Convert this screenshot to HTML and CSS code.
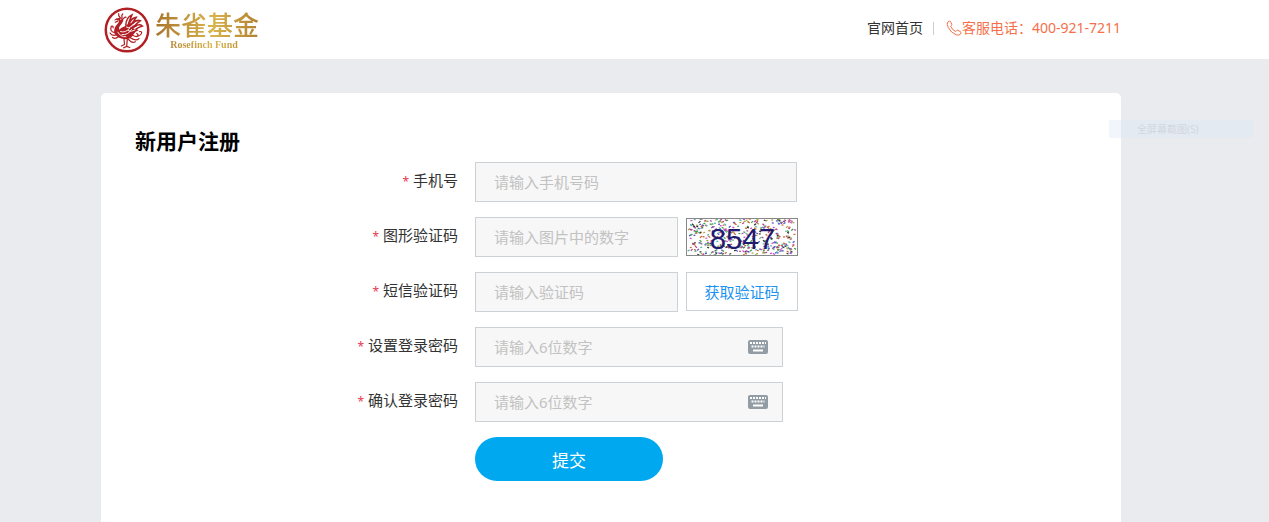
FILE: index.html
```html
<!DOCTYPE html>
<html lang="zh-CN">
<head>
  <meta charset="UTF-8">
  <meta name="viewport" content="width=device-width, initial-scale=1.0">
  <title>新用户注册</title>
  <link rel="stylesheet" href="styles.css">
</head>
<body>
  <header class="header">
    <div class="header-inner">
      <div class="logo">
        <svg class="logo-mark" viewBox="0 0 156 156" aria-hidden="true">
          <circle class="ring" cx="78" cy="78" r="69"/>
          <!-- head, neck and body -->
          <path d="M35 47 Q42 39 51 39 Q61 34 66 43 Q68 50 61 57 Q51 67 52 77 Q59 71 71 66 Q84 54 103 54 Q96 59 91 65 Q102 61 112 64 Q103 69 98 75 Q108 73 116 79 Q105 82 100 91 Q92 108 72 108 Q44 106 37 88 Q33 72 46 59 Q54 51 51 47 Q45 44 35 47Z"/>
          <!-- crest -->
          <path class="line" d="M56 38 Q49 31 51 25 M62 38 Q59 30 64 26 M67 41 Q70 35 75 37 M48 49 L40 53"/>
          <!-- wing feathers -->
          <path class="feather" d="M74 62 Q75 38 94 29 Q88 43 83 57 M85 57 Q92 39 108 37 Q100 49 94 57 M96 57 Q108 43 121 48 Q111 55 103 64 M104 66 Q118 57 128 65 Q116 69 107 75"/>
          <path class="cut" d="M57 83 Q73 89 87 72 M62 93 Q82 95 93 76 M48 85 Q57 101 74 100 M76 69 Q83 75 95 65 M81 80 Q92 86 104 78"/>
          <!-- tail -->
          <path class="line" d="M38 87 Q21 83 27 66 Q33 63 33 71 M43 94 Q28 98 23 88 M49 100 Q41 109 31 102 M96 95 Q114 105 124 91 Q129 82 119 83 M89 103 Q107 116 117 106 M81 107 Q94 123 105 116 M110 89 Q118 95 111 98"/>
          <!-- legs -->
          <path class="line" d="M68 105 L70 125 M79 106 L77 132 M70 125 L60 130 M77 131 L67 136 M77 131 L87 135"/>
          <circle class="eye" cx="58" cy="43" r="2"/>
        </svg>
        <div class="logo-text">
          <div class="logo-name">朱雀基金</div>
          <div class="logo-en">Rosefinch Fund</div>
        </div>
      </div>
      <nav class="top-nav">
        <a class="home-link" href="#">官网首页</a>
        <span class="divider"></span>
        <span class="hotline">
          <svg class="phone-icon" viewBox="0 0 16 16" aria-hidden="true">
            <path d="M3.4 1.2 L1.6 2.2 Q.6 4 2.2 7.3 Q5 13 10.2 14.8 Q13 15.6 14.2 14.4 L15 12.8 Q15.2 12 14.3 11.5 L11.8 10.3 Q11.1 10 10.6 10.6 L9.8 11.5 Q6.2 10.2 4.7 6.3 L5.5 5.4 Q6 4.9 5.7 4.2 L4.6 1.6 Q4.2 .8 3.4 1.2Z"/>
          </svg>
          <span>客服电话：400-921-7211</span>
        </span>
      </nav>
    </div>
  </header>

  <main class="container">
    <form class="card">
      <h1 class="title">新用户注册</h1>

      <div class="form-row">
        <label class="form-label" for="mobile"><span class="required">*</span> 手机号</label>
        <input class="form-input" id="mobile" type="text" placeholder="请输入手机号码">
      </div>

      <div class="form-row">
        <label class="form-label" for="captcha"><span class="required">*</span> 图形验证码</label>
        <input class="form-input short" id="captcha" type="text" placeholder="请输入图片中的数字">
        <svg class="captcha-img" viewBox="0 0 112 38" role="img" aria-label="图形验证码">
          <g id="captchaNoise"></g>
          <text class="captcha-code" x="22" y="32">8547</text>
        </svg>
      </div>

      <div class="form-row">
        <label class="form-label" for="smsCode"><span class="required">*</span> 短信验证码</label>
        <input class="form-input short" id="smsCode" type="text" placeholder="请输入验证码">
        <button class="code-btn" type="button">获取验证码</button>
      </div>

      <div class="form-row">
        <label class="form-label" for="password"><span class="required">*</span> 设置登录密码</label>
        <div class="password-box">
          <input class="password-input" id="password" type="password" placeholder="请输入6位数字">
          <svg class="keyboard-icon" viewBox="0 0 20 14" aria-hidden="true">
            <rect class="board" width="20" height="14" rx="2"/>
            <path class="keys" d="M2 3h16M3.5 6.5h13"/>
            <path class="space" d="M5 10.5h10"/>
          </svg>
        </div>
      </div>

      <div class="form-row">
        <label class="form-label" for="confirm"><span class="required">*</span> 确认登录密码</label>
        <div class="password-box">
          <input class="password-input" id="confirm" type="password" placeholder="请输入6位数字">
          <svg class="keyboard-icon" viewBox="0 0 20 14" aria-hidden="true">
            <rect class="board" width="20" height="14" rx="2"/>
            <path class="keys" d="M2 3h16M3.5 6.5h13"/>
            <path class="space" d="M5 10.5h10"/>
          </svg>
        </div>
      </div>

      <button class="submit-btn" type="submit">提交</button>
    </form>
  </main>

  <div class="ghost-menu">全屏幕截图(S)</div>
  <script src="captcha.js"></script>
</body>
</html>
```

FILE: styles.css
```css
:root {
  --page-bg: #e9ebef;
  --border: #ccd1d6;
  --field-bg: #f7f7f7;
  --text: #333;
  --placeholder: #c2c2c2;
  --blue: #00a8f0;
  --orange: #f5704a;
  --red: #b01f24;
}

* {
  margin: 0;
  padding: 0;
  box-sizing: border-box;
}

body {
  min-height: 100vh;
  display: flex;
  flex-direction: column;
  font-family: "Noto Sans", "Noto Sans CJK SC", sans-serif;
  font-size: 15px;
  color: var(--text);
  background: var(--page-bg);
}

input,
button {
  font-family: inherit;
  font-size: 15px;
}

/* Header */
.header {
  background: #fff;
  padding: 0 148px 0 101px;
}

.header-inner {
  height: 59px;
  display: flex;
  align-items: center;
  justify-content: space-between;
}

.logo {
  display: flex;
  align-items: center;
  gap: 4px;
  padding-left: 2px;
}

.logo-mark {
  width: 48px;
  height: 48px;
  fill: var(--red);
}

.ring {
  fill: none;
  stroke: var(--red);
  stroke-width: 8;
}

.line,
.feather,
.cut {
  fill: none;
  stroke: var(--red);
  stroke-width: 4;
  stroke-linecap: round;
}

.feather {
  stroke-width: 5;
}

.cut {
  stroke: #fff;
  stroke-width: 3;
}

.eye {
  fill: #fff;
}

.logo-text {
  color: transparent;
  background: linear-gradient(90deg, #a8742c, #d9b44c 55%, #b08030);
  -webkit-background-clip: text;
  background-clip: text;
}

.logo-name {
  font-family: "Noto Sans CJK SC", sans-serif;
  font-size: 26px;
  font-weight: 500;
  line-height: 30px;
}

.logo-en {
  padding-right: 6px;
  font-family: "Liberation Serif", serif;
  font-size: 10px;
  font-weight: bold;
  line-height: 12px;
  text-align: center;
}

.top-nav {
  display: flex;
  align-items: center;
  font-size: 14px;
  line-height: 20px;
  padding-bottom: 3px;
}

.home-link {
  color: var(--text);
  text-decoration: none;
}

.divider {
  width: 1px;
  height: 13px;
  margin: 0 12px 0 10px;
  background: #ccc;
}

.hotline {
  display: flex;
  align-items: center;
  color: var(--orange);
}

.phone-icon {
  width: 16px;
  height: 16px;
  fill: none;
  stroke: var(--orange);
}

/* Register form */
.container {
  flex: 1;
  display: flex;
  padding: 34px 148px 0 101px;
}

.card {
  flex: 1;
  padding: 34px 34px 39px;
  background: #fff;
  border-radius: 5px 5px 0 0;
}

.title {
  margin-bottom: 7px;
  font-size: 21px;
  font-weight: bold;
  line-height: 28px;
  color: #000;
}

.form-row {
  display: flex;
  margin-bottom: 15px;
}

.form-label {
  width: 323px;
  margin-right: 17px;
  line-height: 36px;
  text-align: right;
}

.required {
  font-size: 12px;
  color: #e8384f;
}

.form-input,
.password-box {
  width: 322px;
  height: 40px;
  padding: 0 18px;
  border: 1px solid var(--border);
  background: var(--field-bg);
}

.form-input.short {
  width: 203px;
  margin-right: 8px;
}

.password-box {
  width: 308px;
  padding-right: 14px;
  display: flex;
  align-items: center;
}

.password-input {
  flex: 1;
  min-width: 0;
  border: none;
  background: none;
}

.form-input::placeholder,
.password-input::placeholder {
  color: var(--placeholder);
}

.keyboard-icon {
  width: 20px;
  height: 14px;
}

.board {
  fill: #929ca4;
}

.keys,
.space {
  fill: none;
  stroke: #fff;
  stroke-width: 2;
  stroke-dasharray: 2 1;
}

.space {
  stroke-dasharray: none;
}

.captcha-img {
  width: 112px;
  height: 38px;
  margin-top: 1px;
  border: 1px solid #888;
  background: #fff;
}

.captcha-code {
  font-family: "Liberation Sans", sans-serif;
  font-size: 31px;
  fill: #201a70;
}

.code-btn {
  width: 112px;
  height: 39px;
  border: 1px solid var(--border);
  background: #fff;
  color: #1c93f0;
  cursor: pointer;
}

.submit-btn {
  display: block;
  width: 188px;
  height: 44px;
  margin-left: 340px;
  border: none;
  border-radius: 22px;
  background: var(--blue);
  color: #fff;
  font-size: 17px;
  cursor: pointer;
}

/* Faded menu item floating over the page edge */
.ghost-menu {
  position: absolute;
  top: 120px;
  right: 16px;
  width: 144px;
  height: 18px;
  padding-left: 28px;
  font-size: 10px;
  line-height: 18px;
  color: #d3d7de;
  background: rgba(218, 232, 248, 0.4);
}
```

FILE: captcha.js
```js
// scatter short coloured dashes behind the digits
const colors = ['#3f9b4a', '#b0407f', '#5a50c8', '#c9653a', '#333', '#58b8a8', '#c04cc8', '#a8a23c'];
const noise = document.getElementById('captchaNoise');
let seed = 8547;

function rand() {
  seed = (seed * 16807) % 2147483647;
  return seed / 2147483647;
}

for (let i = 0; i < 420; i++) {
  const x = rand() * 112;
  const y = rand() * 38;
  const line = document.createElementNS('http://www.w3.org/2000/svg', 'line');
  line.setAttribute('x1', x);
  line.setAttribute('y1', y);
  line.setAttribute('x2', x + (rand() < 0.5 ? -2 : 2));
  line.setAttribute('y2', y + rand() * 3 - 1);
  line.setAttribute('stroke', colors[i % colors.length]);
  line.setAttribute('stroke-width', 1.3);
  noise.appendChild(line);
}
```
